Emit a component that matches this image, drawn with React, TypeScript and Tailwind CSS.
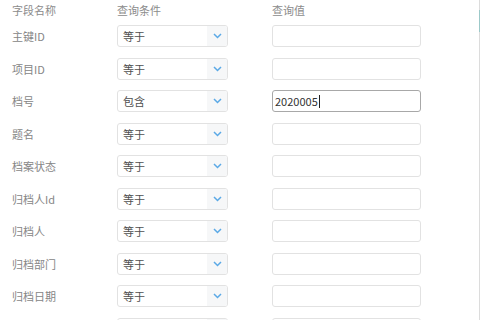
import React from "react";

const rows = [
  { name: "主键ID", op: "等于", value: "" },
  { name: "项目ID", op: "等于", value: "" },
  { name: "档号", op: "包含", value: "2020005", focused: true },
  { name: "题名", op: "等于", value: "" },
  { name: "档案状态", op: "等于", value: "" },
  { name: "归档人Id", op: "等于", value: "" },
  { name: "归档人", op: "等于", value: "" },
  { name: "归档部门", op: "等于", value: "" },
  { name: "归档日期", op: "等于", value: "" },
  { name: "", op: "等于", value: "" },
];

function Chevron() {
  return (
    <svg width="9" height="6" viewBox="0 0 9 6" fill="none">
      <path d="M1 1l3.5 3.5L8 1" stroke="#5aa9e6" strokeWidth="1.5" />
    </svg>
  );
}

export default function App() {
  return (
    <div
      className="flex h-[320px] w-[480px] overflow-hidden bg-white text-[11px]"
      style={{ fontFamily: '"Noto Sans CJK SC", "Noto Sans", sans-serif' }}
    >
      <div className="flex-1 pl-3">
        {/* header */}
        <div className="flex h-[20px] items-center text-[#8c8c8c]">
          <span className="w-[105px]">字段名称</span>
          <span className="w-[155px]">查询条件</span>
          <span>查询值</span>
        </div>

        {rows.map((row, i) => (
          <div key={i} className="flex h-[32.5px] items-center">
            <span className="w-[105px] text-[#868686]">{row.name}</span>
            <div className="flex h-[22px] w-[111px] items-stretch overflow-hidden rounded-[3px] border border-[#e2e2e2] bg-white">
              <span className="flex flex-1 items-center pl-[5px] text-[#505050]">{row.op}</span>
              <span className="flex w-[20px] items-center justify-center bg-[#f6f7f8]">
                <Chevron />
              </span>
            </div>
            <div className="w-[44px]" />
            <div
              className={`flex h-[22px] w-[149px] items-center rounded-[3px] border px-[2px] text-[#333] ${
                row.focused ? "border-[#a8a8a8]" : "border-[#e2e2e2]"
              }`}
            >
              {row.value}
              {row.focused && <span className="ml-[1px] h-[13px] w-px bg-[#222]" />}
            </div>
          </div>
        ))}
      </div>

      {/* scrollbar edge */}
      <div className="flex w-px flex-col bg-[#dcdcdc]">
        <div className="mt-[10px] h-[22px] w-px bg-[#9cc9c9]" />
      </div>
    </div>
  );
}
